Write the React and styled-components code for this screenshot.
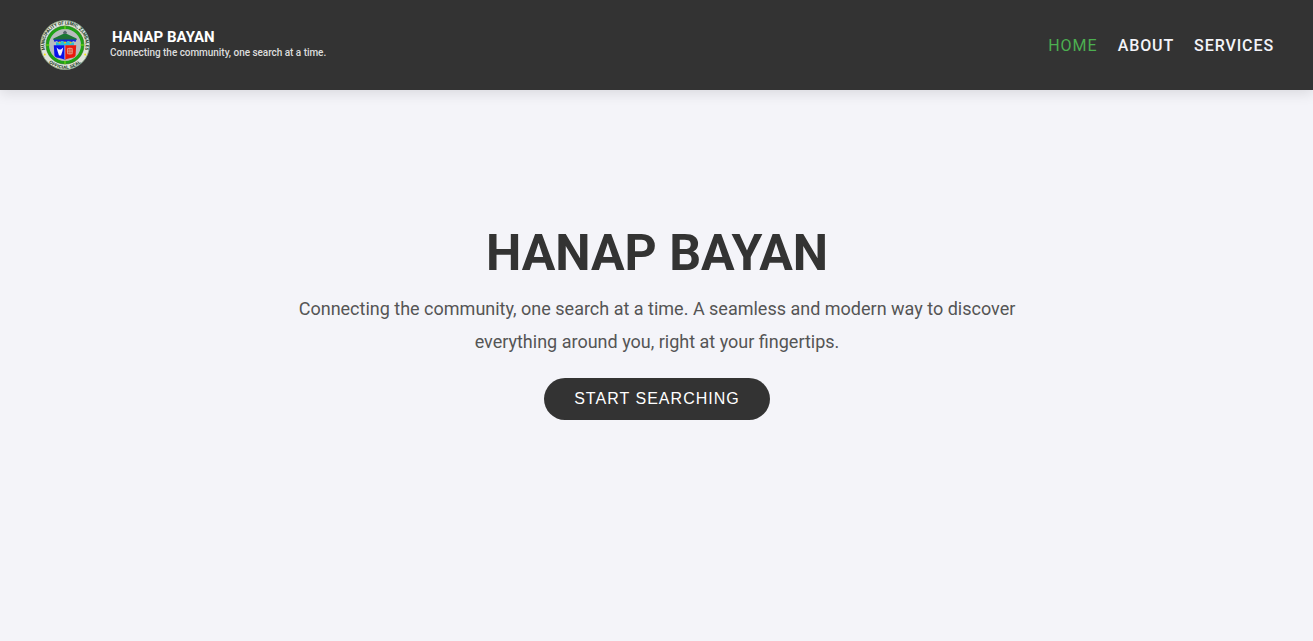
import React from "react";
import styled, { createGlobalStyle } from "styled-components";

const GlobalStyle = createGlobalStyle`
  * { box-sizing: border-box; margin: 0; padding: 0; }
  body {
    background: #f4f4f9;
    font-family: Roboto, "Liberation Sans", sans-serif;
    color: #333;
    overflow: hidden;
  }
`;

const Page = styled.div`
  height: 100vh;
  display: flex;
  flex-direction: column;
`;

const Header = styled.header`
  height: 90px;
  flex: none;
  padding: 0 39px 0 40px;
  display: flex;
  align-items: center;
  justify-content: space-between;
  background: #333;
  box-shadow: 0 4px 12px rgba(0, 0, 0, 0.1);
`;

const Brand = styled.div`
  display: flex;
  align-items: center;
  gap: 20px;
`;

const Seal = styled.svg`
  width: 50px;
  height: 50px;
  display: block;
`;

const BrandText = styled.div`
  display: flex;
  flex-direction: column;
  padding-bottom: 2px;
`;

const BrandName = styled.span`
  padding-left: 2px;
  font-size: 15px;
  font-weight: 700;
  line-height: 18px;
  color: #fff;
`;

const BrandTagline = styled.span`
  font-size: 10px;
  font-weight: 500;
  line-height: 14px;
  letter-spacing: -0.04px;
  color: #ddd;
`;

const Nav = styled.nav`
  display: flex;
  gap: 20px;
`;

const NavLink = styled.a`
  font-size: 16px;
  font-weight: ${(p) => (p.$active ? 400 : 500)};
  letter-spacing: ${(p) => (p.$active ? "1px" : "0.9px")};
  text-transform: uppercase;
  text-decoration: none;
  color: ${(p) => (p.$active ? "#4caf50" : "#f4f4f9")};
`;

const Hero = styled.main`
  flex: 1;
  padding: 133px 0 0 1px;
  display: flex;
  flex-direction: column;
  align-items: center;
  text-align: center;
`;

const Title = styled.h1`
  font-size: 50px;
  font-weight: 700;
  line-height: 60px;
`;

const Lead = styled.p`
  width: 800px;
  margin: 9px 0 20px;
  font-size: 18px;
  line-height: 33px;
  color: #555;
`;

const SearchButton = styled.button`
  width: 226px;
  height: 42px;
  border: 0;
  border-radius: 25px;
  background: #333;
  color: #fff;
  font-family: "Liberation Sans", Arial, sans-serif;
  font-size: 16px;
  letter-spacing: 1.03px;
  text-transform: uppercase;
`;

function MunicipalSeal() {
  return (
    <Seal viewBox="0 0 50 50">
      <defs>
        <path id="sealTop" d="M5.8 32.5 A20.6 20.6 0 1 1 44.2 32.5" />
        <path id="sealBottom" d="M7.5 41 A23.7 23.7 0 0 0 42.5 41" />
      </defs>
      <circle cx="25" cy="25" r="24.5" fill="#dfe3da" stroke="#8aa887" strokeWidth="0.8" />
      <circle cx="25" cy="25" r="17.5" fill="#b9bcbe" stroke="#1fa315" strokeWidth="3" />
      <circle cx="25" cy="25" r="19" fill="none" stroke="#2f6a24" strokeWidth="0.6" />
      <path d="M25 5.5v4M25 40.5v4M5.8 25h4M40.2 25h4" stroke="#7ce018" strokeWidth="1" />
      <text fontSize="4.6" fontWeight="700" fill="#17391b">
        <textPath href="#sealTop" startOffset="50%" textAnchor="middle" textLength="74" lengthAdjust="spacingAndGlyphs">
          MUNICIPALITY OF LEMIC, ZAMBALES
        </textPath>
      </text>
      <text fontSize="4.4" fontWeight="700" fill="#17391b">
        <textPath href="#sealBottom" startOffset="50%" textAnchor="middle" textLength="35" lengthAdjust="spacingAndGlyphs">
          OFFICIAL SEAL
        </textPath>
      </text>
      <circle cx="4.8" cy="34.5" r="1" fill="#f2e600" />
      <circle cx="45.2" cy="34.5" r="1" fill="#f2e600" />
      <path d="M25 10.4 L27 12.2 L26.2 15 H23.8 L23 12.2 Z" fill="#56656b" />
      <path d="M23 14 H27 L36.6 18.4 V20 H13.4 V18.4 Z" fill="#187a32" />
      <path d="M18.5 17h13M16 18.7h18" stroke="#3b5a45" strokeWidth="0.5" />
      <path d="M13.4 19.6 H36.6 L35.4 22 L33.4 21 L31 22.4 L28.4 21 L25.4 22.4 L22 21 L19.4 22.4 L16.6 21 L14.6 22 Z" fill="#1424dc" />
      <path d="M16 22.2 L19.4 22.4 L22 21 L25.4 22.4 L28.4 21 L31 22.4 H34 V25.4 H16 Z" fill="#25bfd9" />
      <circle cx="19.6" cy="22.6" r="1.1" fill="#ddc51c" />
      <circle cx="25" cy="22.6" r="1.1" fill="#ddc51c" />
      <circle cx="30.6" cy="22.6" r="1.1" fill="#ddc51c" />
      <path d="M13.8 25.2 H24.8 V39.8 C20 37.4 14.4 38.4 14.4 35 Z" fill="#0a10ea" />
      <path d="M25 25.2 H36.2 L35.6 35 C35.6 38.4 30 37.4 25 39.8 Z" fill="#ea190e" />
      <path d="M16.6 27.6 L18.8 29.4 H21 L23.2 27.6 L22.4 31.2 L21 35.4 H19 L17.6 31.2 Z" fill="#f3f5ff" />
      <path d="M27.6 28.4h4.6v5.4h-4.6z" fill="#d9452f" stroke="#e8a28c" strokeWidth="0.9" />
      <path d="M26.8 31.1h6.2M29.9 27.6v7" stroke="#e8a28c" strokeWidth="0.7" />
      <path d="M24.9 25.2v14" stroke="#ddd" strokeWidth="0.6" />
    </Seal>
  );
}

export default function App() {
  return (
    <Page>
      <GlobalStyle />
      <Header>
        <Brand>
          <MunicipalSeal />
          <BrandText>
            <BrandName>HANAP BAYAN</BrandName>
            <BrandTagline>Connecting the community, one search at a time.</BrandTagline>
          </BrandText>
        </Brand>
        <Nav>
          <NavLink $active>Home</NavLink>
          <NavLink>About</NavLink>
          <NavLink>Services</NavLink>
        </Nav>
      </Header>
      <Hero>
        <Title>HANAP BAYAN</Title>
        <Lead>
          Connecting the community, one search at a time. A seamless and modern way to discover
          everything around you, right at your fingertips.
        </Lead>
        <SearchButton>Start Searching</SearchButton>
      </Hero>
    </Page>
  );
}
